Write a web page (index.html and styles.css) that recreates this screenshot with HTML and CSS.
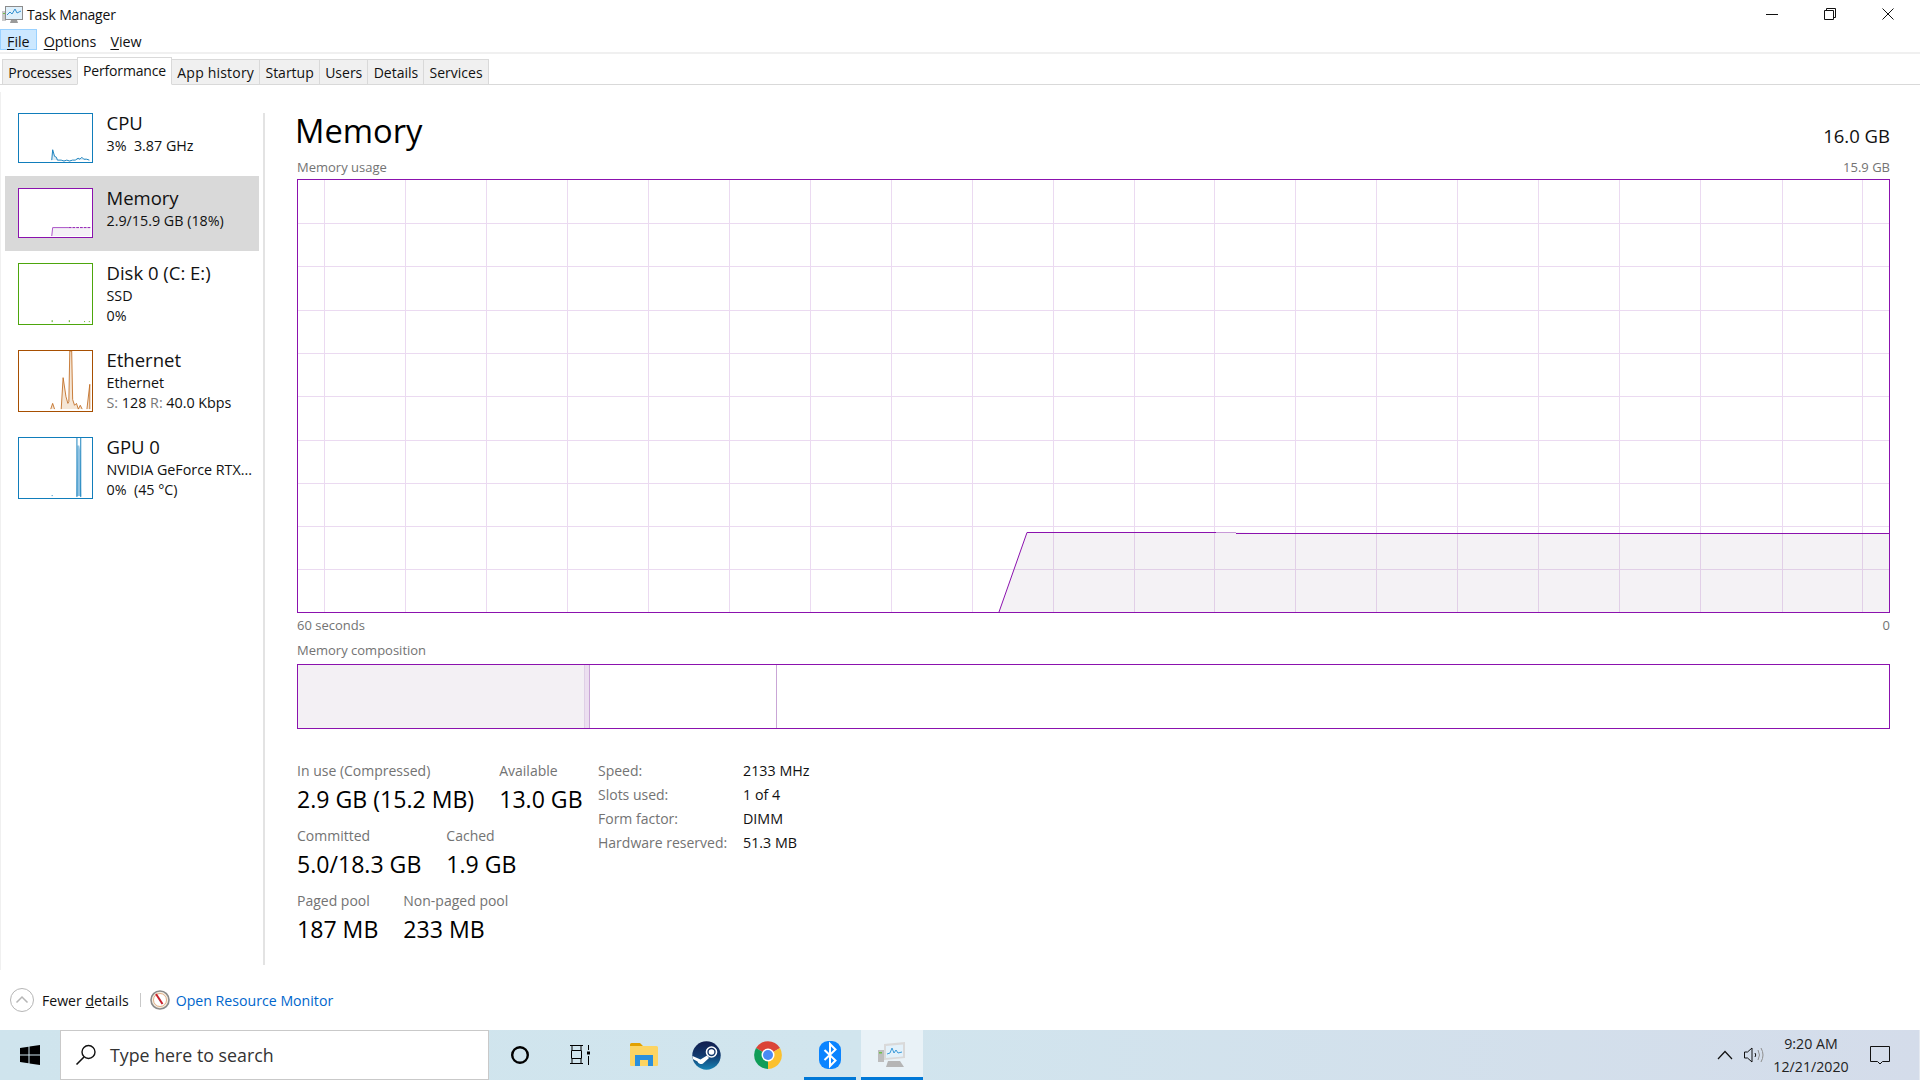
FILE: index.html
```html
<!DOCTYPE html>
<html lang="en">
<head>
<meta charset="utf-8">
<title>Task Manager</title>
<link rel="stylesheet" href="styles.css">
</head>
<body>
<header class="titlebar">
  <svg class="app-icon" width="22" height="20" viewBox="0 0 22 20"><rect x="0" y="6" width="4" height="10" fill="#c9c9c9"/><rect x="1" y="8" width="2" height="1" fill="#6fbf4a"/><rect x="3.5" y="1.5" width="17" height="13" fill="#dff0fb" stroke="#8c8c8c"/><path d="M5 10l3-3 2 2 3-5 2 4 4-2" fill="none" stroke="#2f8fd0"/><path d="M9 15h6l1 3H8z" fill="#9a9a9a"/></svg>
  <span class="app-title">Task Manager</span>
  <div class="win-controls">
    <span class="win-btn"><svg width="12" height="12" viewBox="0 0 12 12"><path d="M0 6.5h12" stroke="#111" fill="none"/></svg></span>
    <span class="win-btn"><svg width="12" height="12" viewBox="0 0 12 12"><path d="M.5 2.5h9v9h-9zM2.5 2.5v-2h9v9h-2" stroke="#111" fill="none"/></svg></span>
    <span class="win-btn"><svg width="12" height="12" viewBox="0 0 12 12"><path d="M.5.5l11 11M11.500.5l-11 11" stroke="#111" fill="none"/></svg></span>
  </div>
</header>
<nav class="menubar">
  <span class="menu-item menu-active"><u>F</u>ile</span>
  <span class="menu-item"><u>O</u>ptions</span>
  <span class="menu-item"><u>V</u>iew</span>
</nav>
<nav class="tabs">
  <span class="tab tab-tight">Processes</span>
  <span class="tab tab-tight tab-active">Performance</span>
  <span class="tab tab-wide">App history</span>
  <span class="tab">Startup</span>
  <span class="tab">Users</span>
  <span class="tab">Details</span>
  <span class="tab">Services</span>
</nav>
<div class="content">
  <div class="edge"></div>
  <aside class="sidebar">
    <div class="res">
      <svg class="thumb thumb-cpu" width="75" height="50" viewBox="0 0 76 51"><path d="M34 49l1-11 2 7 2 1 1 3 4 0 3 1 3-1 3 1 3-1 3 0 3-2 2 1 2-2 2 2 3 0 3 1" fill="#dcebf5" stroke="#117dbb" stroke-width="1"/></svg>
      <div class="res-text"><div class="res-name">CPU</div><div class="res-sub">3%&nbsp; 3.87 GHz</div></div>
    </div>
    <div class="res res-active">
      <svg class="thumb thumb-mem" width="75" height="50" viewBox="0 0 76 51"><path d="M34 50l1-9h40v9z" fill="#f4f1f6"/><path d="M34 50l1-9h17" fill="none" stroke="#a64cc4"/><path d="M52 41h23" fill="none" stroke="#8b12ae" stroke-dasharray="3 1"/></svg>
      <div class="res-text"><div class="res-name">Memory</div><div class="res-sub">2.9/15.9 GB (18%)</div></div>
    </div>
    <div class="res">
      <svg class="thumb thumb-disk" width="75" height="62" viewBox="0 0 76 63"><path d="M34.500 61v-2M52.500 61v-2M68.500 61v-1M73.500 61v-1" stroke="#4da60c" fill="none"/></svg>
      <div class="res-text"><div class="res-name">Disk 0 (C: E:)</div><div class="res-sub">SSD</div><div class="res-sub">0%</div></div>
    </div>
    <div class="res">
      <svg class="thumb thumb-eth" width="75" height="62" viewBox="0 0 76 63"><path d="M33 61l2-6 2 6M44 61l2-33 3 20 2 7 1-2 1-53h2l1 51 2 6 2-2 2 6M62 61l2-4 2 4M71 61l3-26v26" fill="#f5e6d6" stroke="#c06a20" stroke-width=".9"/></svg>
      <div class="res-text"><div class="res-name">Ethernet</div><div class="res-sub">Ethernet</div><div class="res-sub"><span class="muted">S:</span> 128 <span class="muted">R:</span> 40.0 Kbps</div></div>
    </div>
    <div class="res">
      <svg class="thumb thumb-gpu" width="75" height="62" viewBox="0 0 76 63"><path d="M60 61l1-53 2 0 1 6 1 47z" fill="#8fc3e3"/><path d="M60.500 0v62M64.500 0v62" stroke="#117dbb" fill="none"/><path d="M34.500 61v-1" stroke="#117dbb" fill="none"/></svg>
      <div class="res-text"><div class="res-name">GPU 0</div><div class="res-sub res-clip">NVIDIA GeForce RTX...</div><div class="res-sub">0%&nbsp; (45 °C)</div></div>
    </div>
  </aside>
  <div class="divider"></div>
  <main class="main">
    <div class="head"><h1 class="head-title">Memory</h1><span class="head-size">16.0 GB</span></div>
    <div class="cap cap-first"><span>Memory usage</span><span>15.9 GB</span></div>
    <svg class="graph" height="434" viewBox="0 0 1593 434" preserveAspectRatio="none">
      <path class="grid" d="M27.500 0V434M108.500 0V434M189.500 0V434M270.500 0V434M351.500 0V434M432.500 0V434M513.500 0V434M594.500 0V434M675.500 0V434M756.500 0V434M837.500 0V434M917.500 0V434M998.500 0V434M1079.500 0V434M1160.500 0V434M1241.500 0V434M1322.500 0V434M1403.500 0V434M1485.500 0V434M1565.500 0V434M0 44.500H1593M0 87.500H1593M0 131.500H1593M0 174.500H1593M0 217.500H1593M0 261.500H1593M0 304.500H1593M0 347.500H1593M0 390.500H1593"/>
      <path class="area" d="M702 433L730 353H938L958 354H1592V433Z"/>
      <path class="curve" d="M702 433L730 353.500H919M939 354.500H1592"/>
      <path class="curve-soft" d="M919 353.500H939"/>
      <rect class="frame" x=".5" y=".5" width="1592" height="433"/>
    </svg>
    <div class="cap cap-axis"><span>60 seconds</span><span>0</span></div>
    <div class="cap cap-comp"><span>Memory composition</span></div>
    <div class="comp">
      <div class="comp-use"></div>
      <div class="comp-mod"></div>
      <div class="comp-stand"></div>
      <div class="comp-free"></div>
    </div>
    <section class="stats">
      <div class="stat-block">
        <div class="stat-row">
          <div class="stat"><div class="stat-label">In use (Compressed)</div><div class="stat-value">2.9 GB (15.2 MB)</div></div>
          <div class="stat"><div class="stat-label">Available</div><div class="stat-value">13.0 GB</div></div>
        </div>
        <div class="stat-row">
          <div class="stat"><div class="stat-label">Committed</div><div class="stat-value">5.0/18.3 GB</div></div>
          <div class="stat"><div class="stat-label">Cached</div><div class="stat-value">1.9 GB</div></div>
        </div>
        <div class="stat-row">
          <div class="stat"><div class="stat-label">Paged pool</div><div class="stat-value">187 MB</div></div>
          <div class="stat"><div class="stat-label">Non-paged pool</div><div class="stat-value">233 MB</div></div>
        </div>
      </div>
      <div class="specs">
        <span class="spec-key">Speed:</span><span>2133 MHz</span>
        <span class="spec-key">Slots used:</span><span>1 of 4</span>
        <span class="spec-key">Form factor:</span><span>DIMM</span>
        <span class="spec-key">Hardware reserved:</span><span>51.3 MB</span>
      </div>
    </section>
  </main>
</div>
<footer class="footer">
  <svg class="foot-chev" width="24" height="24" viewBox="0 0 24 24"><circle cx="12" cy="12" r="11.500" fill="#fff" stroke="#b5b5b5"/><path d="M6.500 14.500L12 9l5.500 5.500" fill="none" stroke="#b5b5b5" stroke-width="1.500"/></svg>
  <span class="foot-text">Fewer <u>d</u>etails</span>
  <span class="foot-sep"></span>
  <svg class="foot-gauge" width="20" height="20" viewBox="0 0 20 20"><circle cx="10" cy="10" r="9" fill="#f3ece0" stroke="#8a8a8a" stroke-width="1.600"/><circle cx="10" cy="10" r="6.500" fill="#fff" stroke="#d99a6a" stroke-width=".8"/><path d="M6 4l6.500 10" stroke="#c8202a" stroke-width="2"/></svg>
  <a class="foot-link" href="#">Open Resource Monitor</a>
</footer>
<div class="taskbar">
  <span class="start"><svg width="20" height="20" viewBox="0 0 20 20"><path d="M0 3l8.500-1.300V9.500H0zM9.500 1.500L20 0v9.500H9.500zM0 10.500h8.500v7.800L0 17zM9.500 10.500H20V20L9.500 18.500z" fill="#000"/></svg></span>
  <div class="search">
    <svg width="22" height="22" viewBox="0 0 22 22"><circle cx="13.500" cy="8" r="6.500" fill="none" stroke="#111" stroke-width="1.400"/><path d="M9 13L1.500 20.500" stroke="#111" stroke-width="1.600"/></svg>
    <span class="search-text">Type here to search</span>
  </div>
  <div class="task-btn"><svg width="20" height="20" viewBox="0 0 20 20"><circle cx="10" cy="10" r="7.800" fill="none" stroke="#000" stroke-width="2.400"/></svg></div>
  <div class="task-btn task-view"><svg width="20" height="20" viewBox="0 0 20 20"><path d="M0 .5h13M2 0v5M11 0v5M1.500 5.500h10v8h-10zM0 18.500h13M2 14v5M11 14v5M18.500 0v5M18.500 11v9" fill="none" stroke="#000"/><rect x="17" y="6.500" width="3" height="3" fill="#000"/></svg></div>
  <div class="task-btn"><svg width="28" height="24" viewBox="0 0 28 24"><path d="M0 1.500A1.500 1.500 0 011.500 0H10l3 3H0z" fill="#e2a100"/><path d="M0 3h26.500A1.500 1.500 0 0128 4.500V22a1 1 0 01-1 1H1a1 1 0 01-1-1z" fill="#fcd462"/><path d="M5 12h18v11h-5v-6h-8v6H5z" fill="#2a8fdc"/></svg></div>
  <div class="task-btn"><svg width="29" height="29" viewBox="0 0 29 29"><defs><linearGradient id="steam" x1="0" y1="0" x2="0" y2="1"><stop offset="0" stop-color="#111d4e"/><stop offset=".5" stop-color="#123a6e"/><stop offset="1" stop-color="#1783b5"/></linearGradient></defs><circle cx="14.500" cy="14.500" r="14.200" fill="url(#steam)"/><circle cx="19.500" cy="11" r="5" fill="none" stroke="#fff" stroke-width="1.600"/><circle cx="19.500" cy="11" r="2.800" fill="#fff"/><path d="M.5 15l8 3.500 6.500-4 2 2.500-6 5.500a3.800 3.800 0 01-5.500-2L.8 18z" fill="#fff"/></svg></div>
  <div class="task-btn"><svg width="28" height="28" viewBox="0 0 28 28"><path d="M14 14L2 7A14 14 0 0126 7z" fill="#db4437"/><path d="M14 14l12-7a14 14 0 01-12 21z" fill="#fbc02d"/><path d="M14 14v14A14 14 0 012 7z" fill="#0f9d58"/><circle cx="14" cy="14" r="6.500" fill="#fff"/><circle cx="14" cy="14" r="5" fill="#4a8af4"/></svg></div>
  <div class="task-btn task-run"><svg width="22" height="28" viewBox="0 0 22 28"><rect width="22" height="28" rx="9" fill="#0a84ff"/><path d="M5.500 9l11 10.500L11 25V3l5.500 5.500L5.500 19" fill="none" stroke="#fff" stroke-width="2"/></svg></div>
  <div class="task-btn task-run task-open"><svg width="28" height="26" viewBox="0 0 28 26"><rect x="0" y="8" width="6" height="12" fill="#bdbdbd"/><rect x="1" y="10" width="3" height="1.500" fill="#6fbf4a"/><path d="M6 2l21-2v16L6 18z" fill="#d9d9d9"/><path d="M8 4l17-1.500v12L8 16z" fill="#e3f1fa"/><path d="M9 12l3-1 2-5 2 5 2-3 2 3 4-1" fill="none" stroke="#3a9ad9"/><path d="M10 19h12l4 6H8z" fill="#b5b5b5"/></svg></div>
  <div class="tray">
    <svg class="tray-chev" width="16" height="10" viewBox="0 0 16 10"><path d="M1 9l7-7.500L15 9" fill="none" stroke="#111" stroke-width="1.200"/></svg>
    <svg class="tray-vol" width="20" height="16" viewBox="0 0 20 16"><path d="M.5 5h3L8 1v14L3.500 11h-3z" fill="none" stroke="#111"/><path d="M11 6q1.500 2 0 4" fill="none" stroke="#111"/><path d="M14 3q3 5 0 10M17 1q4 7 0 14" fill="none" stroke="#8f8f8f"/></svg>
    <div class="clock"><span>9:20 AM</span><span>12/21/2020</span></div>
    <svg class="tray-note" width="20" height="20" viewBox="0 0 20 20"><path d="M.5 1.500h19v15h-7L10 19l-2.500-2.500h-7z" fill="none" stroke="#111"/></svg>
  </div>
</div>
</body>
</html>
```
FILE: styles.css
```css
* { box-sizing: border-box; }
html, body { margin: 0; height: 100%; }
body {
  display: flex;
  flex-direction: column;
  height: 100vh;
  overflow: hidden;
  background: #fff;
  color: #111;
  font-family: "Open Sans", "Noto Sans", sans-serif;
  font-size: 14px;
}

.titlebar { display: flex; align-items: center; height: 29px; padding-left: 2px; }
.app-icon { margin-right: 3px; }
.app-title { font-size: 14px; letter-spacing: -.2px; }
.win-controls { display: flex; margin: -2px 0 0 auto; padding-right: 3px; }
.win-btn { display: flex; justify-content: center; align-items: center; width: 58px; height: 29px; }

.menubar { display: flex; height: 25px; padding-bottom: 2px; border-bottom: 2px solid #f0f0f0; }
.menu-item { padding: 0 7px; line-height: 25px; font-size: 14.300px; }
.menu-item u { text-underline-offset: 2px; }
.menu-active { background: #cce8ff; border: 1px solid #99d1ff; padding: 0 6px; line-height: 23px; }

.tabs { display: flex; align-items: flex-end; height: 31px; padding-left: 3px; border-bottom: 1px solid #d9d9d9; }
.tab {
  height: 26px;
  margin-bottom: -1px;
  margin-left: -1px;
  padding: 0 5.200px;
  background: #f0f0f0;
  border: 1px solid #d9d9d9;
  line-height: 25px;
  font-size: 14px;
}
.tab-tight { letter-spacing: -.17px; }
.tab-wide { letter-spacing: .2px; }
.tab-active { position: relative; height: 28px; background: #fff; border-bottom-color: #fff; line-height: 26px; }

.content { display: flex; flex: 1; min-height: 0; }
.edge { width: 1px; margin-top: 7px; background: #f0f0f0; }
.sidebar { width: 262px; padding-top: 16px; }
.res { display: flex; gap: 13.500px; width: 254px; margin-left: 4px; padding: 12px 0 13px 13px; }
.res-active { background: #d9d9d9; }
.thumb { display: block; flex: none; background: #fff; border: 1px solid; }
.thumb-cpu, .thumb-gpu { border-color: #117dbb; }
.thumb-mem { border-color: #8b12ae; }
.thumb-disk { border-color: #4da60c; }
.thumb-eth { border-color: #a74f01; }
.res-text { min-width: 0; margin-bottom: -1px; }
.res-name { font-size: 18.500px; line-height: 20px; margin-bottom: 3px; }
.res-sub { font-size: 14.300px; line-height: 20px; white-space: nowrap; }
.muted { color: #777; }

.divider { width: 2px; margin: 28px 0 5px; background: #e3e3e3; }
.main { flex: 1; min-width: 0; padding: 24px 30px 0 32px; }
.head { display: flex; justify-content: space-between; height: 43px; }
.head-title { margin: 0 0 0 -2px; font-size: 32.700px; font-weight: 400; line-height: 44px; color: #000; }
.head-size { font-size: 18.500px; line-height: 44px; padding-top: 5px; }
.cap { display: flex; justify-content: space-between; font-size: 13px; line-height: 16px; color: #737373; }
.cap-first { margin: 7px 0 4px; }
.cap-axis { margin-top: 4px; }
.cap-comp { margin: 9px 0 6px; }

.graph { display: block; width: 100%; }
.grid { fill: none; stroke: #ebdaf1; }
.area { fill: #3a0a50; fill-opacity: .055; }
.curve { fill: none; stroke: #8b12ae; }
.curve-soft { fill: none; stroke: #c89ad8; }
.frame { fill: none; stroke: #8b12ae; }

.comp { display: flex; height: 65px; border: 1px solid #8b12ae; }
.comp-use { width: 286px; background: #f3f0f4; }
.comp-mod { width: 6px; background: #ecdff0; border-right: 1px solid #c9a6d6; border-left: 1px solid #dfd0e6; }
.comp-stand { width: 187px; border-right: 1px solid #c9a6d6; }
.comp-free { flex: 1; }

.stats { display: flex; margin-top: 30px; }
.stat-block { width: 301px; padding-top: 3px; }
.stat-row { display: flex; gap: 25px; margin-bottom: 12px; }
.stat-label { font-size: 14px; line-height: 18px; margin-bottom: 3px; color: #737373; white-space: nowrap; }
.stat-value { font-size: 23.100px; line-height: 32px; white-space: nowrap; color: #000; }
.specs { display: grid; grid-template-columns: 145px auto; grid-auto-rows: 24px; line-height: 24px; font-size: 14.300px; }
.spec-key { color: #737373; font-size: 14px; }

.footer { display: flex; align-items: center; height: 60px; padding-left: 10px; }
.foot-text { margin-left: 8px; font-size: 14.100px; }
.foot-sep { width: 1px; height: 14px; margin: 0 9px 0 11px; background: #c8c8c8; }
.foot-link { margin-left: 6px; color: #0066cc; font-size: 14.150px; text-decoration: none; }

.taskbar {
  display: flex;
  align-items: stretch;
  height: 50px;
  background: linear-gradient(90deg, #cfe4ed 0%, #d1e5ee 45%, #d4dcea 100%);
}
.start { display: flex; justify-content: center; align-items: center; width: 60px; }
.search {
  display: flex;
  align-items: center;
  gap: 13px;
  width: 429px;
  padding-left: 14px;
  background: #fff;
  border: 1px solid #c9c9c9;
}
.search-text { font-size: 17.800px; color: #333; }
.task-btn { position: relative; display: flex; justify-content: center; align-items: center; width: 62px; }
.task-view svg { margin-right: 4px; }
.task-run::after { content: ""; position: absolute; left: 5px; right: 5px; bottom: 0; height: 3px; background: #0078d7; }
.task-open { background: #e9f2f7; }
.task-open::after { left: 0; right: 0; }
.tray { display: flex; align-items: center; margin-left: auto; padding-right: 29px; border-right: 1px solid #e4e9f1; }
.tray-chev { margin-right: 11px; }
.tray-vol { margin-right: 4px; }
.clock { display: flex; flex-direction: column; align-items: center; width: 86px; margin-right: 16px; font-size: 14.200px; line-height: 23px; color: #222; }
```
